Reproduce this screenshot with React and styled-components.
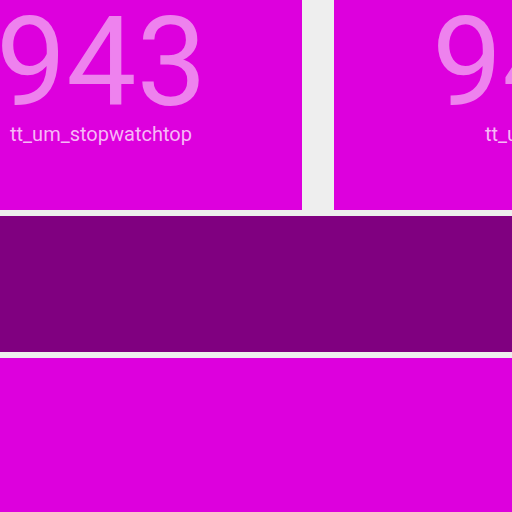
import React from "react";
import styled, { createGlobalStyle } from "styled-components";

const Global = createGlobalStyle`
  html, body { margin: 0; padding: 0; background: #eeeeee; }
  body { font-family: Roboto, "Noto Sans", sans-serif; overflow: hidden; }
`;

const Page = styled.div`
  width: 512px;
  height: 512px;
  display: flex;
  flex-direction: column;
  gap: 6px;
  background: #eeeeee;
  overflow: hidden;
`;

const TopRow = styled.div`
  display: grid;
  grid-template-columns: 302px 1fr;
  column-gap: 32px;
  height: 210px;
  flex: none;
`;

const Tile = styled.div`
  background: #dd00dd;
  overflow: hidden;
  display: flex;
  flex-direction: column;
  padding-left: ${(p) => p.$offset}px;
  white-space: nowrap;
`;

const Number = styled.div`
  font-family: Roboto, sans-serif;
  font-weight: 400;
  font-size: 125px;
  line-height: 123px;
  color: #ee82ee;
  margin-top: 1px;
  margin-left: -4px;
`;

const Label = styled.div`
  font-family: Roboto, sans-serif;
  font-size: 20px;
  line-height: 1;
  color: #f7b8f7;
  margin-left: ${(p) => p.$indent}px;
`;

const Band = styled.div`
  background: ${(p) => p.$color};
  height: ${(p) => p.$h}px;
  flex: none;
`;

const Rest = styled.div`
  background: #dd00dd;
  flex: 1;
`;

export default function App() {
  return (
    <>
      <Global />
      <Page>
        <TopRow>
          <Tile $offset={0}>
            <Number>943</Number>
            <Label $indent={10}>tt_um_stopwatchtop</Label>
          </Tile>
          <Tile $offset={102}>
            <Number>943</Number>
            <Label $indent={49}>tt_um_stopwatchtop</Label>
          </Tile>
        </TopRow>
        <Band $color="#800080" $h={136} />
        <Rest />
      </Page>
    </>
  );
}
